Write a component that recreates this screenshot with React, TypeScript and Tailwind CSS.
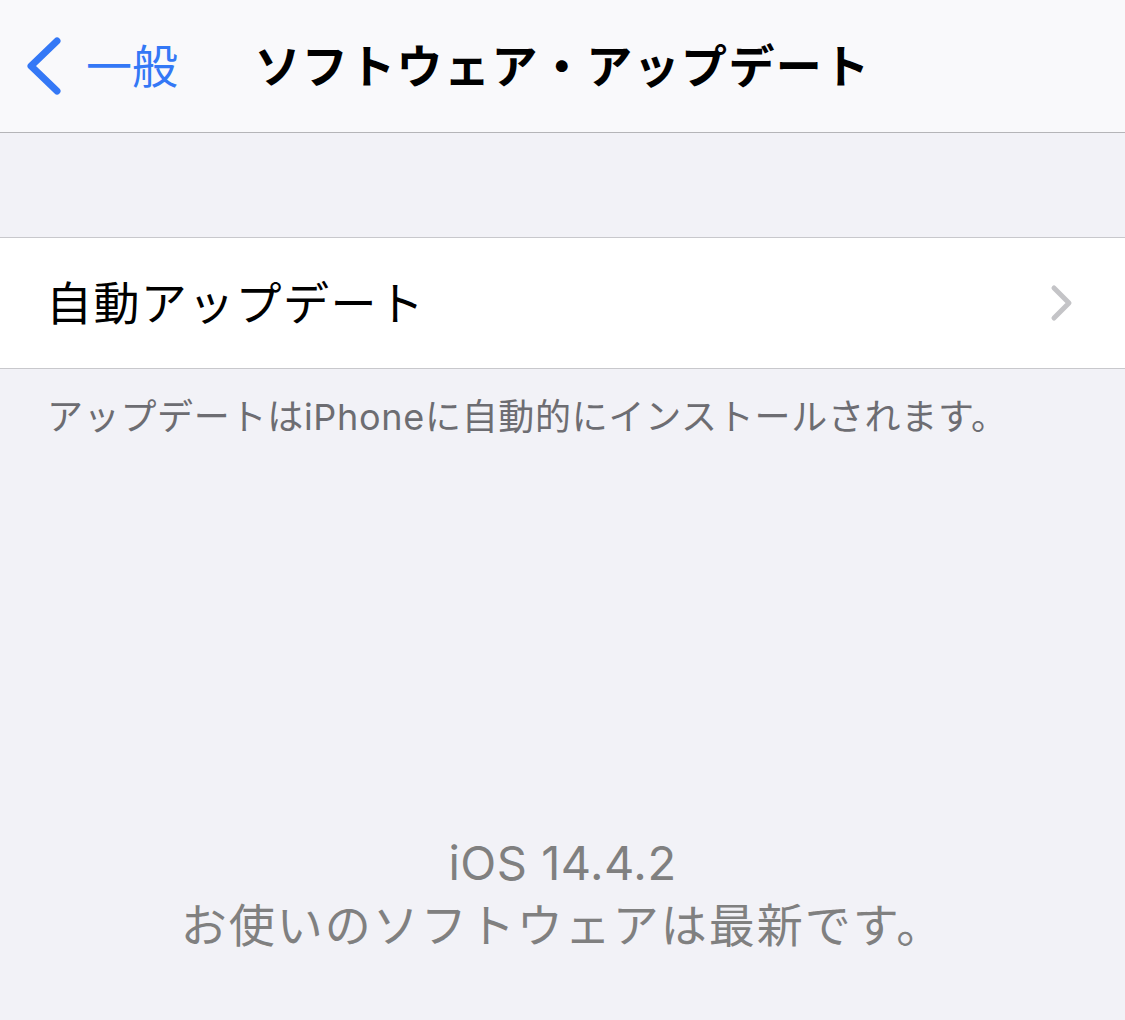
import React from 'react';

const font = { fontFamily: 'Inter, "Noto Sans CJK JP", sans-serif' };

const BackChevron = () => (
  <svg width="40" height="60" viewBox="0 0 40 60" fill="none">
    <path d="M31 5 L5 30 L31 55" stroke="#3478f6" strokeWidth="7" strokeLinecap="round" strokeLinejoin="round" />
  </svg>
);

const RowChevron = () => (
  <svg width="26" height="40" viewBox="0 0 26 40" fill="none">
    <path d="M5 5 L20 20 L5 35" stroke="#c4c4c7" strokeWidth="5" strokeLinecap="round" strokeLinejoin="round" />
  </svg>
);

const App: React.FC = () => {
  return (
    <div className="w-[1125px] h-[1020px] bg-[#f2f2f7] overflow-hidden" style={font}>
      {/* navigation bar */}
      <header className="h-[133px] bg-[#f9f9fb] border-b border-[#b5b5b8] grid grid-cols-[1fr_auto_1fr] items-center">
        <div className="flex items-center pl-[26px] text-[#3478f6] text-[46px] leading-none">
          <BackChevron />
          <span className="ml-[20px]">一般</span>
        </div>
        <h1 className="text-[46px] font-bold text-black leading-none tracking-[1.4px]">
          ソフトウェア・アップデート
        </h1>
        <div />
      </header>

      <div className="h-[104px]" />

      {/* settings row */}
      <div className="bg-white border-y border-[#c8c8cc] h-[132px] flex items-center justify-between pl-[46px] pr-[50px]">
        <span className="text-[46px] text-black leading-none tracking-[1.4px]">自動アップデート</span>
        <RowChevron />
      </div>

      <p className="pt-[27px] pl-[47px] text-[36px] leading-[43px] text-[#6d6d72] tracking-[0.7px]">
        アップデートはiPhoneに自動的にインストールされます。
      </p>

      {/* version info */}
      <div className="mt-[392px] flex flex-col items-center text-[#808080] text-[46px] leading-[63px]">
        <span className="text-[47px] tracking-[0.5px]">iOS 14.4.2</span>
        <span className="tracking-[2px]">お使いのソフトウェアは最新です。</span>
      </div>
    </div>
  );
};

export default App;
